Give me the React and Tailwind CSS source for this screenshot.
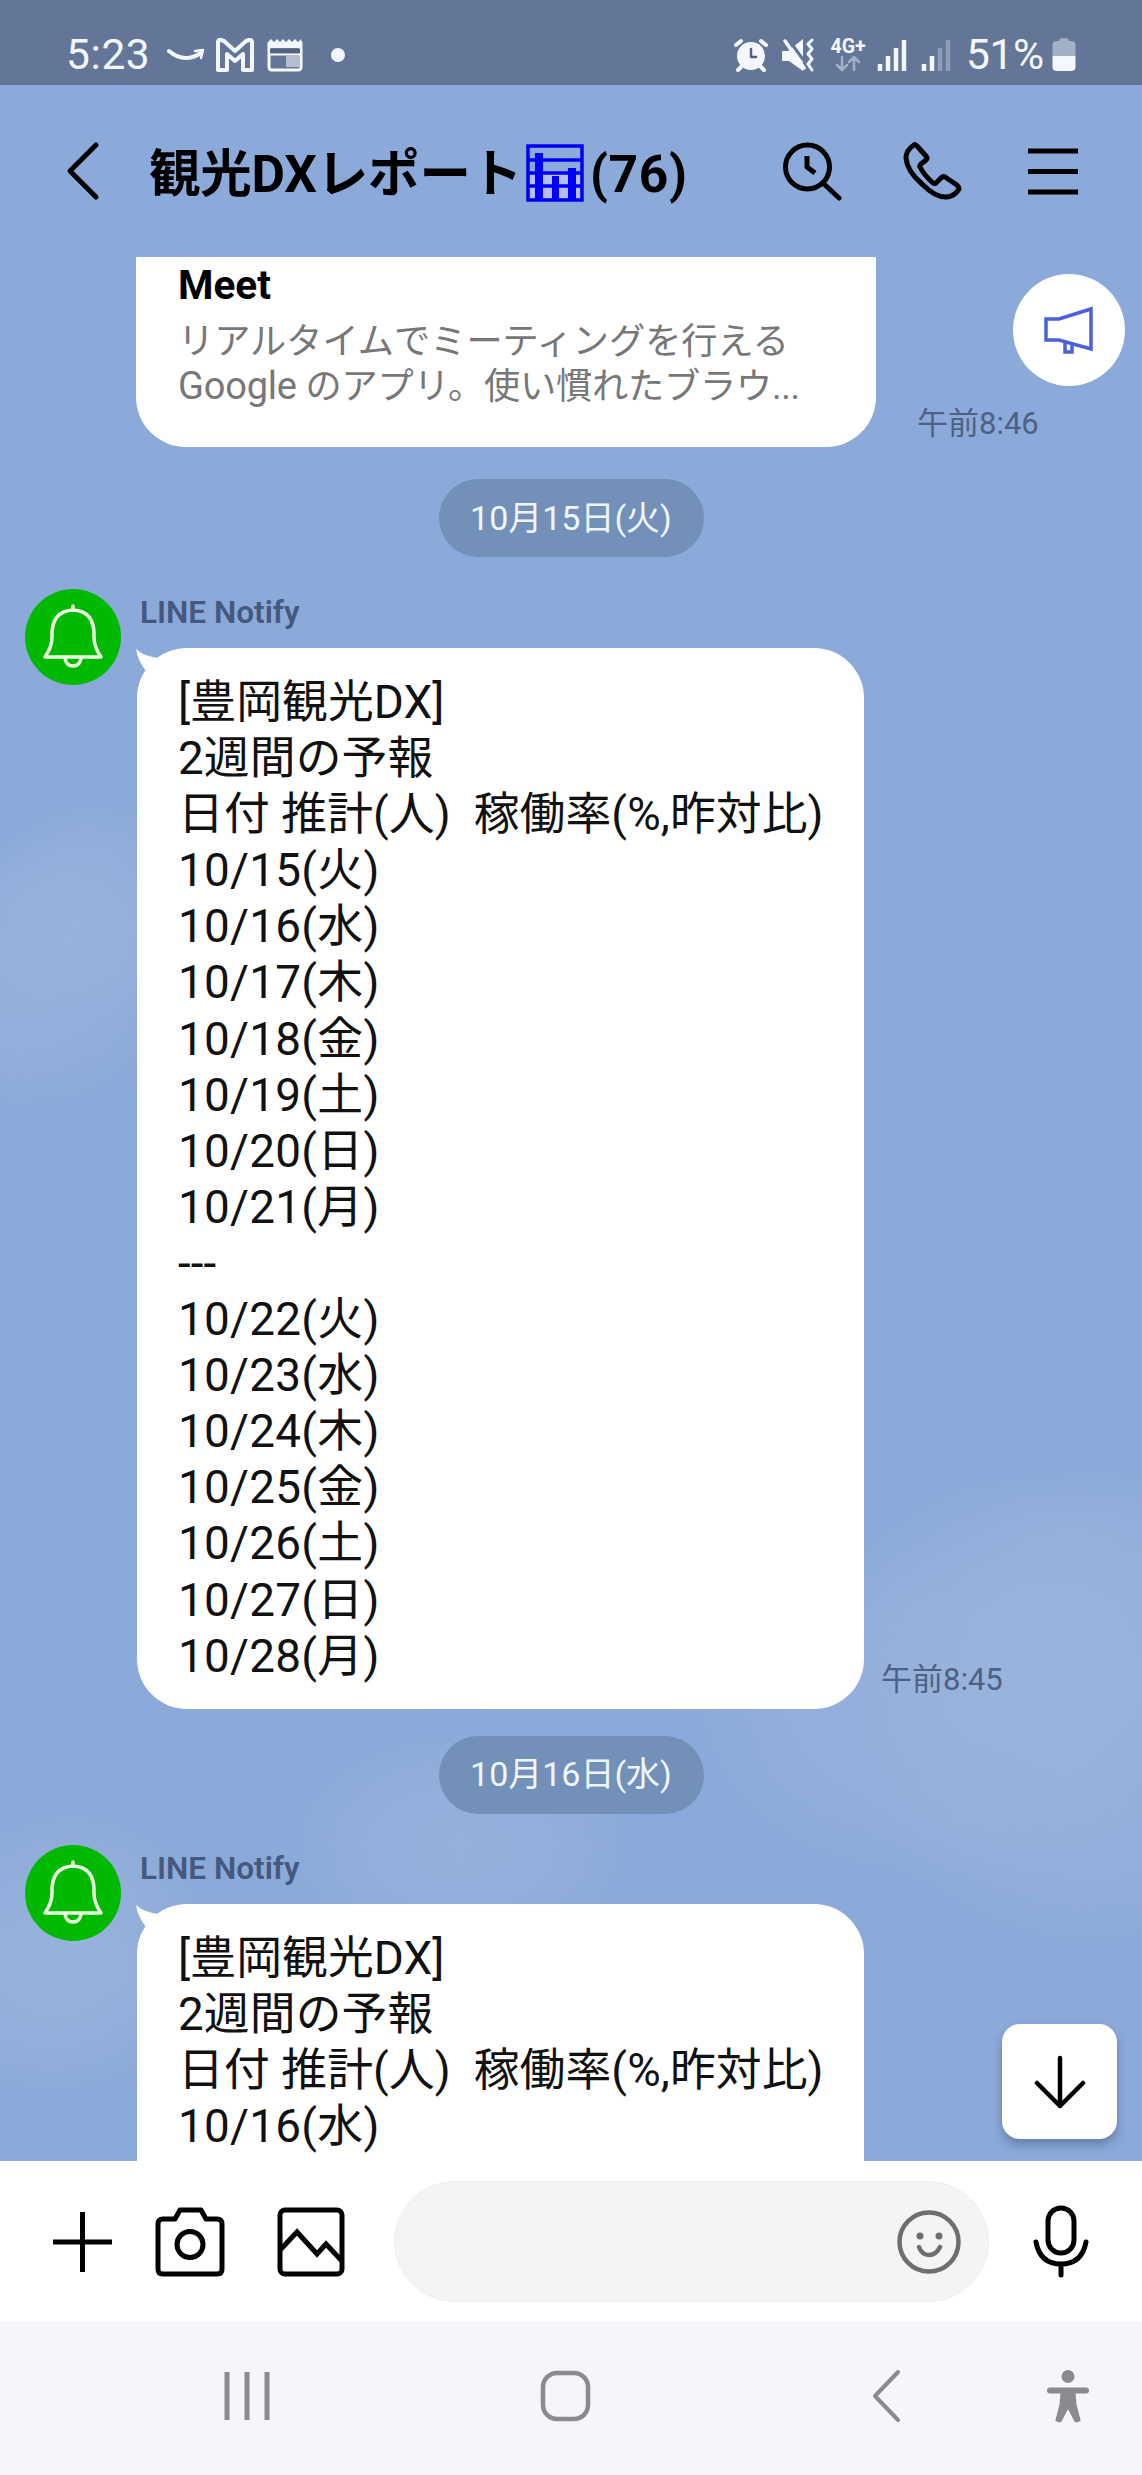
import React from "react";

const messageFont = "font-['Roboto','Noto_Sans_CJK_JP',sans-serif]";

const messages = [
  {
    date: "10月15日(火)",
    time: "午前8:45",
    lines: [
      "[豊岡観光DX]",
      "2週間の予報",
      "日付 推計(人)  稼働率(%,昨対比)",
      "10/15(火)",
      "10/16(水)",
      "10/17(木)",
      "10/18(金)",
      "10/19(土)",
      "10/20(日)",
      "10/21(月)",
      "---",
      "10/22(火)",
      "10/23(水)",
      "10/24(木)",
      "10/25(金)",
      "10/26(土)",
      "10/27(日)",
      "10/28(月)",
    ],
  },
  {
    date: "10月16日(水)",
    lines: ["[豊岡観光DX]", "2週間の予報", "日付 推計(人)  稼働率(%,昨対比)", "10/16(水)"],
    continues: true,
  },
];

const Icon = ({ w, h, className = "", stroke = 5, children }) => (
  <svg
    width={w}
    height={h}
    viewBox={`0 0 ${w} ${h}`}
    className={`shrink-0 ${className}`}
    fill="none"
    stroke="currentColor"
    strokeWidth={stroke}
    strokeLinecap="round"
    strokeLinejoin="round"
  >
    {children}
  </svg>
);

const StatusBar = () => (
  <div className="flex h-[85px] items-center bg-[#637697] pt-[25px] pl-[66px] text-[#f3f8ff]">
    <span className="w-[101px] text-[42.5px] leading-[60px] tracking-[0.6px]">5:23</span>
    <Icon w={38} h={34} stroke={3}>
      <path d="M2 13 Q17 26 34 15" strokeWidth={4} />
      <path d="M28 13 L36 12 L34 20" strokeWidth={2.5} />
    </Icon>
    <Icon w={38} h={34} stroke={4} className="ml-[11px]">
      <path d="M2 4 Q2 1.500 5 2 L8 3 L19 13 L30 3 L33 2 Q36 1.500 36 4 V32 H27 V16 L19 23 L11 16 V32 H2 Z" />
    </Icon>
    <Icon w={36} h={34} className="ml-[13px]" stroke={3}>
      <path d="M2 5 V29 Q2 32 5 32 H31 Q34 32 34 29 V5" />
      <path d="M1 4 L4 1 L7 4 L10 1 L13 4 L16 1 L19 4 L22 1 L25 4 L28 1 L31 4 L34 1 L35 5 V10 H1 Z" fill="currentColor" stroke="none" />
      <path d="M3 13 H33" stroke="#56637f" strokeLinecap="butt" strokeWidth={4} />
      <path d="M3 16.500 H33" strokeLinecap="butt" strokeWidth={2} />
      <path d="M19 17 H32 V29 H19 Z" fill="#b3bfd3" stroke="none" />
    </Icon>
    <span className="ml-[28px] size-[14px] rounded-full bg-[#f3f8ff]" />

    <Icon w={34} h={34} stroke={4} className="ml-[389px]">
      <circle cx="17" cy="18" r="14" fill="currentColor" stroke="none" />
      <path d="M2 7 L7 3 M32 7 L27 3 M8 28 L4 32 M26 28 L30 32" />
      <path d="M17 11 V19 H22" stroke="#56637f" strokeWidth={2.5} />
    </Icon>
    <Icon w={34} h={34} stroke={3} className="ml-[13px]">
      <path d="M1 13 H7 L22 1 V33 L8 23 H1 Z" fill="currentColor" stroke="none" />
      <path d="M8 2 L26 27" stroke="#637697" strokeWidth={3} />
      <path d="M4 3 L23 30" strokeWidth={3.5} />
      <path d="M31 2 L27 6 L31 11 L27 16 L31 21 L27 26 L31 32" strokeWidth={3} />
    </Icon>
    <div className="ml-[14px] flex w-[38px] flex-col items-center">
      <span className="text-[19.5px] leading-[16px] font-bold">4G+</span>
      <Icon w={28} h={17} stroke={2.5} className="text-[#a3b1c8]">
        <path d="M8 2 V14 M3 10 L8 15 L13 10 M20 15 V3 M15 7 L20 2 L25 7" />
      </Icon>
    </div>
    <Icon w={31} h={34} stroke={4.5} className="ml-[10px]">
      <g strokeLinecap="butt">
        <path d="M3 26 V33 M11 18 V33 M19 10 V33 M27 2 V33" />
      </g>
    </Icon>
    <Icon w={31} h={34} stroke={4.5} className="ml-[13px]">
      <g strokeLinecap="butt">
        <path d="M3 26 V33 M11 18 V33" />
        <path d="M19 10 V33 M27 2 V33" stroke="#8e9cb6" />
      </g>
    </Icon>
    <span className="ml-[14px] w-[78px] text-[42.5px] leading-[60px] tracking-[-0.4px]">51%</span>
    <Icon w={24} h={34} className="ml-[8px]" stroke={0}>
      <path d="M7 3 Q7 0 12 0 Q17 0 17 3 H19 Q23.500 3 23.500 7 V18 H0.500 V7 Q0.500 3 5 3 Z" fill="#a3afc4" />
      <path d="M0.500 18 H23.500 V29 Q23.500 33 19 33 H5 Q0.500 33 0.500 29 Z" fill="currentColor" />
    </Icon>
  </div>
);

// the bar chart emoji in the room name
const ChartEmoji = () => (
  <svg width="58" height="58" viewBox="0 0 58 58" className="ml-[6px] shrink-0">
    <path d="M4 30 H54 V54 H4 Z" fill="#b5bdfb" />
    <path d="M2 2 H56 V56 H2 Z M2 16 H56 M2 29 H56 M2 42 H56" fill="none" stroke="#0000f5" strokeWidth="3.500" />
    <path d="M9 9 H17 V56 H9 Z M26 32 H33 V56 H26 Z M42 24 H50 V56 H42 Z" fill="#0000ff" />
  </svg>
);

const Header = () => (
  <div className="flex h-[172px] items-center pl-[66px] text-black">
    <Icon w={34} h={60}>
      <path d="M30 4 L4 30 L30 56" />
    </Icon>
    <h1 className="ml-[49px] flex items-center pt-[4px] text-[51.5px] leading-[72px] font-bold whitespace-nowrap">
      <span className="w-[371px] pt-[3px] tracking-[-0.2px]">観光DXレポート</span>
      <ChartEmoji />
      <span className="ml-[6px] w-[101px] pt-[3px] tracking-[0.6px]">(76)</span>
    </h1>
    <Icon w={60} h={60} className="ml-[91px]">
      <circle cx="25.500" cy="26" r="22" />
      <path d="M41 42 L57 57" />
      <path d="M25 15 V26 L33 32" strokeLinecap="butt" />
    </Icon>
    <Icon w={60} h={60} className="ml-[60px]">
      <path d="M12 4 Q4 9 4 17 Q5 30 20 43 Q34 57 45 56 Q53 55 57 48 Q57 46 55 44 L43 36 Q41 35 39 37 L34 42 Q33 43 31 42 Q22 34 18 26 Q17 25 19 23 L24 19 Q26 17 24 15 L15 5 Q13 3 12 4 Z" />
    </Icon>
    <Icon w={52} h={60} className="ml-[65px]">
      <path d="M1 10 H51 M1 30.500 H51 M1 51 H51" strokeLinecap="butt" />
    </Icon>
  </div>
);

const Clouds = () => (
  <svg className="absolute inset-0" width="1142" height="1904" viewBox="0 0 1142 1904">
    <defs>
      <filter id="soft" x="-20%" y="-20%" width="140%" height="140%">
        <feGaussianBlur stdDeviation="12" />
      </filter>
      <radialGradient id="cloud">
        <stop offset="0" stopColor="#9ab4dc" stopOpacity="0.700" />
        <stop offset="0.600" stopColor="#9ab4dc" stopOpacity="0.450" />
        <stop offset="1" stopColor="#9ab4dc" stopOpacity="0" />
      </radialGradient>
    </defs>
    <g fill="url(#cloud)" filter="url(#soft)">
      <ellipse cx="90" cy="650" rx="110" ry="110" />
      <ellipse cx="20" cy="720" rx="170" ry="140" />
      <ellipse cx="1020" cy="1360" rx="190" ry="150" />
      <ellipse cx="1110" cy="1370" rx="170" ry="170" />
      <ellipse cx="930" cy="1460" rx="250" ry="170" />
      <ellipse cx="1090" cy="1530" rx="220" ry="170" />
      <ellipse cx="460" cy="1590" rx="180" ry="120" />
      <ellipse cx="70" cy="1660" rx="140" ry="110" />
      <ellipse cx="50" cy="1740" rx="150" ry="100" />
    </g>
  </svg>
);

const DatePill = ({ children, className }) => (
  <div className={`mx-auto flex h-[78px] w-[265px] items-center justify-center rounded-full bg-[#7390b9] text-[34px] text-[#f0f6ff] ${className}`}>
    {children}
  </div>
);

const Avatar = () => (
  <div className="flex size-[96px] shrink-0 items-center justify-center rounded-full bg-[#00b900] text-[#eaffdf]">
    <Icon w={62} h={66} stroke={3.5}>
      <path d="M31 2 V6 M10 33 Q9 7 31 6 Q53 7 52 33 Q52 43 59 53 H3 Q10 43 10 33 Z" />
      <path d="M23 54 Q24 62 31 62 Q38 62 39 54" />
    </Icon>
  </div>
);

const Message = ({ lines, time, continues }) => (
  <div className="flex items-start pl-[25px]">
    <Avatar />
    <div className="ml-[16px]">
      <div className="h-[59px] pt-[1px] pl-[3px] text-[31.5px] leading-[46px] font-semibold text-[#44597d]">LINE Notify</div>
      <div className="flex items-end">
        <div
          className={`relative w-[727px] rounded-[50px] bg-white pt-[27px] pl-[41px] text-[45.8px] leading-[56.1px] tracking-[0.1px] whitespace-pre text-[#111] ${
            continues ? "pb-[120px]" : "pb-[24px]"
          }`}
        >
          {/* tail */}
          <svg className="absolute top-0 left-[-2px]" width="46" height="44" viewBox="0 0 46 44">
            <path d="M1 1 Q10 9 24 10 Q31 8 46 2 L40 40 L4 42 Q6 32 12 24 Q3 14 1 1 Z" fill="#fff" />
          </svg>
          {lines.map((line, index) => (
            <div key={index} className={`relative ${line.startsWith("10/") ? "tracking-[0.3px]" : ""}`}>
              {line}
            </div>
          ))}
        </div>
        {time && <span className="ml-[17px] pb-[6px] text-[31px] leading-[46px] text-[#4d6184]">{time}</span>}
      </div>
    </div>
  </div>
);

const Chat = () => (
  <div className="relative h-[1904px] overflow-hidden">
    <Clouds />
    <div className="relative">
      <div className="flex items-end">
        <div className="ml-[136px] h-[190px] w-[740px] rounded-b-[50px] bg-white pt-[4px] pl-[42px]">
          <div className="text-[40.5px] leading-[48px] font-bold text-black">Meet</div>
          <div className="mt-[10px] text-[36.2px] leading-[45px] whitespace-nowrap text-[#777]">
            <p>リアルタイムでミーティングを行える</p>
            <p className="tracking-[-0.2px]">
              <span className="text-[38px]">Google</span> のアプリ。使い慣れたブラウ<span className="font-[Roboto]">...</span>
            </p>
          </div>
        </div>
        <span className="ml-[41px] text-[31px] leading-[46px] text-[#4d6184]">午前8:46</span>
      </div>
      {messages.map((message, index) => (
        <div key={message.date}>
          <DatePill className={index === 0 ? "mt-[32px] mb-[32px]" : "mt-[27px] mb-[31px]"}>{message.date}</DatePill>
          <Message {...message} />
        </div>
      ))}
    </div>

    <button className="absolute top-[17px] left-[1013px] flex size-[112px] items-center justify-center rounded-full bg-white text-[#4b60dc]">
      <Icon w={52} h={48} stroke={3.5}>
        <g strokeLinejoin="miter">
          <path d="M3 13 H16 L48 3 V43 L16 34 H3 Z M22 36 V46 H29 V38" />
        </g>
      </Icon>
    </button>
    <button className="absolute top-[1767px] left-[1002px] flex h-[115px] w-[115px] items-center justify-center rounded-[18px] bg-white text-black shadow-[0_6px_10px_rgba(60,80,120,0.45)]">
      <Icon w={52} h={54} stroke={4.5}>
        <path d="M26 3 V51 M3 28 L26 51 L49 28" />
      </Icon>
    </button>
  </div>
);

const InputBar = () => (
  <div className="flex h-[161px] items-center bg-white pl-[51px] text-black">
    <Icon w={63} h={64}>
      <path d="M31.500 2 V62 M2 32 H61" strokeLinecap="butt" />
    </Icon>
    <Icon w={70} h={70} className="ml-[41px]">
      <path d="M3 17 Q3 12 8 12 H20 L25 3 H46 L51 12 H62 Q67 12 67 17 V62 Q67 67 62 67 H8 Q3 67 3 62 Z" />
      <circle cx="35" cy="37.500" r="13" />
    </Icon>
    <Icon w={68} h={70} className="ml-[52px]">
      <rect x="3" y="3" width="62" height="64" rx="5" />
      <path d="M4 42 L20 25 L40 47 L49 37 L64 53" strokeLinejoin="miter" />
    </Icon>
    <div className="ml-[49px] flex h-[121px] w-[595px] items-center justify-end rounded-full border border-[#efefef] bg-[#f4f4f4] pr-[26px] text-[#6e6e6e]">
      <Icon w={66} h={66} stroke={4.5}>
        <circle cx="33" cy="33" r="29.500" />
        <circle cx="24" cy="27" r="3.500" fill="currentColor" stroke="none" />
        <circle cx="43" cy="27" r="3.500" fill="currentColor" stroke="none" />
        <path d="M23 38 Q26 46 33 46 Q40 46 44 38" />
      </Icon>
    </div>
    <Icon w={58} h={74} className="ml-[43px]">
      <rect x="16" y="3" width="26" height="45" rx="13" />
      <path d="M4 37 Q8 59 29 59 Q50 59 54 37 M29 59 V70" />
    </Icon>
  </div>
);

const NavBar = () => (
  <div className="flex h-[153px] items-center bg-[#f5f5fa] pb-[6px] pl-[222px] text-[#8b8b8d]">
    <Icon w={50} h={54} stroke={5}>
      <path d="M5 3 V51 M25 3 V51 M45 3 V51" strokeLinecap="butt" />
    </Icon>
    <Icon w={54} h={54} stroke={4.5} className="ml-[267px]">
      <rect x="4" y="4" width="45" height="46" rx="14" />
    </Icon>
    <Icon w={32} h={54} stroke={4} className="ml-[278px]">
      <path d="M27 3 L4 27 L27 51" />
    </Icon>
    <Icon w={44} h={54} className="ml-[142px]">
      <circle cx="23" cy="7.500" r="6.500" fill="currentColor" stroke="none" />
      <path d="M5 21.500 H41" strokeWidth={6} />
      <path d="M17 23 H29 L30 36 L34 51 L31 52 L23 37 L15 52 L12 51 L16 36 Z" fill="currentColor" strokeWidth={3} />
    </Icon>
  </div>
);

export default function App() {
  return (
    <div className={`h-[2475px] w-[1142px] overflow-hidden bg-[#8ba9d9] ${messageFont}`}>
      <StatusBar />
      <Header />
      <Chat />
      <InputBar />
      <NavBar />
    </div>
  );
}
